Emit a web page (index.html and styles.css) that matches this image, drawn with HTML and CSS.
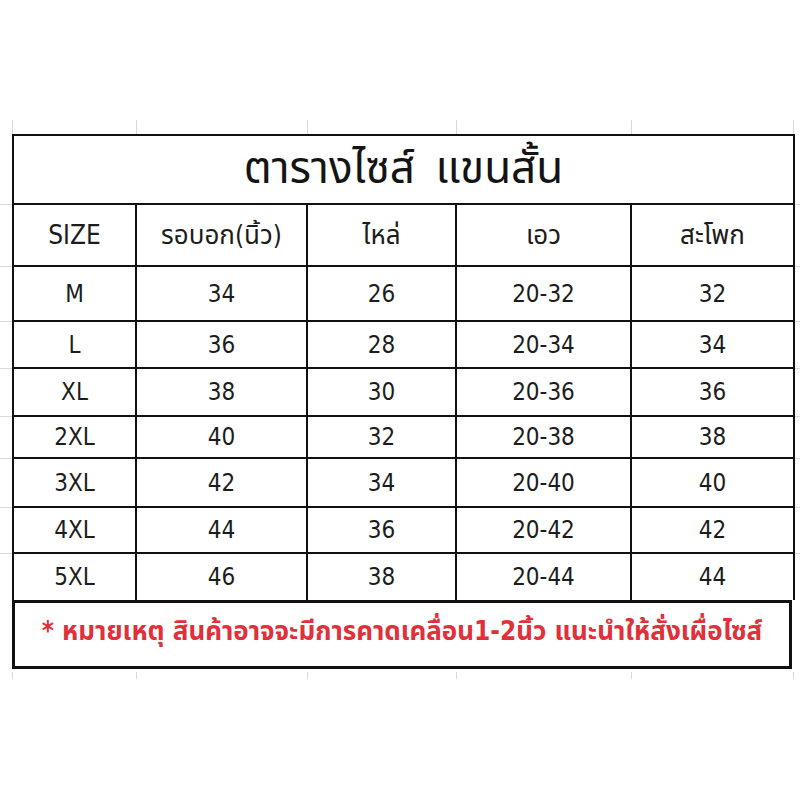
FILE: index.html
```html
<!DOCTYPE html>
<html lang="th">
<head>
<meta charset="utf-8">
<title>ตารางไซส์ แขนสั้น</title>
<link rel="stylesheet" href="styles.css">
</head>
<body>
<div class="sheet">
  <div class="ticks ticks-top">
    <span class="tick w1"></span><span class="tick w2"></span><span class="tick w3"></span><span class="tick w4"></span><span class="tick w5 last"></span>
  </div>

  <div class="row r-title">
    <div class="stub"></div>
    <div class="cell title first">ตารางไซส์ แขนสั้น</div>
    <div class="stub-r"></div>
  </div>

  <div class="row r-head">
    <div class="stub"></div>
    <div class="cell w1 first">SIZE</div>
    <div class="cell w2">รอบอก(นิ้ว)</div>
    <div class="cell w3">ไหล่</div>
    <div class="cell w4">เอว</div>
    <div class="cell w5">สะโพก</div>
    <div class="stub-r"></div>
  </div>

  <div class="row r-m">
    <div class="stub"></div>
    <div class="cell w1 first">M</div><div class="cell w2">34</div><div class="cell w3">26</div><div class="cell w4">20-32</div><div class="cell w5">32</div>
    <div class="stub-r"></div>
  </div>
  <div class="row r-l">
    <div class="stub"></div>
    <div class="cell w1 first">L</div><div class="cell w2">36</div><div class="cell w3">28</div><div class="cell w4">20-34</div><div class="cell w5">34</div>
    <div class="stub-r"></div>
  </div>
  <div class="row r-xl">
    <div class="stub"></div>
    <div class="cell w1 first">XL</div><div class="cell w2">38</div><div class="cell w3">30</div><div class="cell w4">20-36</div><div class="cell w5">36</div>
    <div class="stub-r"></div>
  </div>
  <div class="row r-2xl">
    <div class="stub"></div>
    <div class="cell w1 first">2XL</div><div class="cell w2">40</div><div class="cell w3">32</div><div class="cell w4">20-38</div><div class="cell w5">38</div>
    <div class="stub-r"></div>
  </div>
  <div class="row r-3xl">
    <div class="stub"></div>
    <div class="cell w1 first">3XL</div><div class="cell w2">42</div><div class="cell w3">34</div><div class="cell w4">20-40</div><div class="cell w5">40</div>
    <div class="stub-r"></div>
  </div>
  <div class="row r-4xl">
    <div class="stub"></div>
    <div class="cell w1 first">4XL</div><div class="cell w2">44</div><div class="cell w3">36</div><div class="cell w4">20-42</div><div class="cell w5">42</div>
    <div class="stub-r"></div>
  </div>
  <div class="row r-5xl">
    <div class="stub"></div>
    <div class="cell w1 first">5XL</div><div class="cell w2">46</div><div class="cell w3">38</div><div class="cell w4">20-44</div><div class="cell w5">44</div>
    <div class="stub-r"></div>
  </div>

  <div class="note-row">
    <div class="note">* หมายเหตุ สินค้าอาจจะมีการคาดเคลื่อน1-2นิ้ว แนะนำให้สั่งเผื่อไซส์</div>
  </div>

  <div class="ticks ticks-bottom">
    <span class="tick w1"></span><span class="tick w2"></span><span class="tick w3"></span><span class="tick w4"></span><span class="tick w5 last"></span>
  </div>
</div>
</body>
</html>
```

FILE: styles.css
```css
html, body {
  margin: 0;
  padding: 0;
  background: #ffffff;
}

body {
  width: 800px;
  height: 800px;
  overflow: hidden;
  font-family: "Tahoma", "DejaVu Sans Condensed", "DejaVu Sans", "Noto Sans Thai", "Noto Sans", sans-serif;
  color: #1c1c1c;
}

.sheet {
  padding-top: 120px;
}

.w1 { width: 125px; }
.w2 { width: 171px; }
.w3 { width: 149px; }
.w4 { width: 175px; }
.w5 { width: 163px; }

.ticks {
  display: flex;
  padding-left: 12px;
}

.ticks-top {
  height: 14px;
}

.ticks-bottom {
  height: 7px;
  margin-top: 3px;
}

.tick {
  box-sizing: border-box;
  border-left: 1px solid #d9d9d9;
  height: 100%;
}

.tick.w1 { width: 124px; }
.tick.last { border-right: 1px solid #d9d9d9; }

.row {
  display: flex;
  box-sizing: border-box;
}

.stub {
  width: 12px;
  flex: none;
  box-sizing: border-box;
  border-bottom: 1px solid #d9d9d9;
}

.stub-r {
  flex: 1;
  box-sizing: border-box;
  border-bottom: 1px solid #d9d9d9;
}

.cell {
  flex: none;
  box-sizing: border-box;
  display: flex;
  align-items: center;
  justify-content: center;
  border-right: 2px solid #111;
  border-bottom: 2px solid #111;
  font-size: 24px;
  line-height: 1;
  white-space: nowrap;
}

.cell.first {
  border-left: 2px solid #111;
}

.title {
  width: 783px;
  border-top: 2px solid #111;
  font-size: 44px;
  word-spacing: 8px;
  color: #141414;
  padding-bottom: 4px;
}

.r-title { height: 71px; }
.r-head { height: 62px; }
.r-head .cell { font-size: 26px; }
.r-m { height: 55px; }
.r-l { height: 47px; }
.r-xl { height: 48px; }
.r-2xl { height: 42px; }
.r-3xl { height: 49px; }
.r-4xl { height: 46px; }
.r-5xl { height: 46px; }
.r-5xl .cell { border-bottom: none; }
.r-5xl .stub,
.r-5xl .stub-r { border-bottom: none; }

.note-row {
  padding-left: 12px;
}

.note {
  box-sizing: border-box;
  width: 780px;
  height: 69px;
  border: 3px solid #111;
  display: flex;
  align-items: center;
  justify-content: center;
  padding-bottom: 6px;
  color: #e0303a;
  font-size: 26px;
  font-weight: bold;
  white-space: nowrap;
}
```
